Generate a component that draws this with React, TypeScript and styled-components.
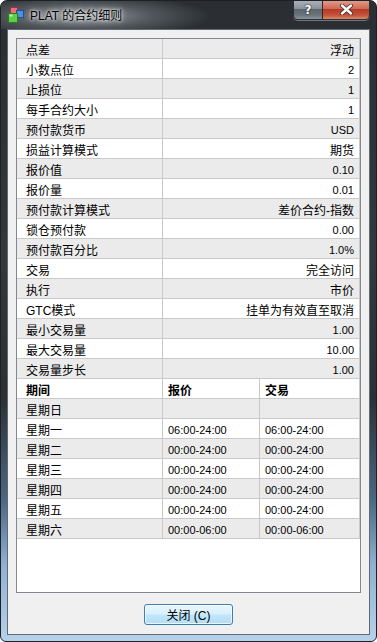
import React from "react";
import styled, { createGlobalStyle } from "styled-components";

const GlobalStyle = createGlobalStyle`
  html, body {
    margin: 0;
    padding: 0;
    background: #ffffff;
  }
  body {
    font-family: "Liberation Sans", "Noto Sans CJK SC", sans-serif;
  }
`;

const colors = {
  line: "#c9c9c9",
  altRow: "#ebebeb",
  client: "#f0f0f0",
  panelBorder: "#828790",
  text: "#000000",
};

const Window = styled.div`
  box-sizing: border-box;
  width: 377px;
  height: 642px;
  display: flex;
  flex-direction: column;
  border: 1px solid #1d2024;
  border-radius: 7px 7px 6px 6px;
  overflow: hidden;
  background: linear-gradient(
    180deg,
    #2a2e32 0%,
    #33383d 40%,
    #2c3035 62%,
    #4b6883 78%,
    #8fb0d2 88%,
    #b8d1ea 100%
  );
`;

const TitleBar = styled.div`
  height: 28px;
  display: flex;
  align-items: flex-start;
  padding: 0 6px 0 6px;
  background: radial-gradient(
    ellipse 130px 22px at 80px 15px,
    rgba(170, 176, 182, 0.85) 0%,
    rgba(120, 126, 132, 0.5) 55%,
    rgba(40, 44, 48, 0) 100%
  );
`;

const TitleGroup = styled.div`
  display: flex;
  align-items: center;
  gap: 6px;
  margin-top: 6px;
  flex: 1;
`;

const TitleText = styled.span`
  font-family: "Liberation Sans", "Noto Sans CJK SC", sans-serif;
  font-size: 12px;
  color: #000;
  text-shadow: 0 0 6px #fff, 0 0 3px #fff;
  line-height: 16px;
`;

const CaptionGroup = styled.div`
  display: flex;
  margin-top: -1px;
  border: 1px solid #2a2f35;
  border-top: none;
  border-radius: 0 0 5px 5px;
  overflow: hidden;
  box-shadow: 0 1px 0 rgba(255, 255, 255, 0.35);
`;

const CaptionButton = styled.div<{ $close?: boolean }>`
  height: 19px;
  width: ${(p) => (p.$close ? "47px" : "28px")};
  display: flex;
  align-items: center;
  justify-content: center;
  box-sizing: border-box;
  border-left: ${(p) => (p.$close ? "1px solid #3a2420" : "none")};
  background: ${(p) =>
    p.$close
      ? "linear-gradient(180deg, #e3a08f 0%, #cf6a57 45%, #b63a25 50%, #c4523c 80%, #d98a6a 100%)"
      : "linear-gradient(180deg, #aeb5bc 0%, #8a939b 45%, #5d666e 50%, #6a747c 80%, #8c969e 100%)"};
  color: #fff;
  font-family: "DejaVu Sans", sans-serif;
  font-weight: bold;
  font-size: 12px;
  text-shadow: 0 0 2px #222, 0 0 1px #222;
`;

const Client = styled.div`
  flex: 1;
  margin: 0 6px 6px 6px;
  display: flex;
  flex-direction: column;
  background: ${colors.client};
  border: 1px solid #5e6a77;
`;

const Panel = styled.div`
  flex: 1;
  margin: 8px 8px 0 8px;
  background: #fff;
  border: 1px solid ${colors.panelBorder};
`;

const Table = styled.div`
  width: 343px;
  display: flex;
  flex-direction: column;
`;

const Row = styled.div<{ $alt: boolean; $cols: string }>`
  display: grid;
  grid-template-columns: ${(p) => p.$cols};
  background: ${(p) => (p.$alt ? colors.altRow : "#ffffff")};
`;

const Cell = styled.div<{
  $align?: "left" | "right";
  $pad?: number;
  $latin?: boolean;
  $bold?: boolean;
}>`
  box-sizing: border-box;
  height: 20px;
  display: flex;
  align-items: center;
  justify-content: ${(p) => (p.$align === "right" ? "flex-end" : "flex-start")};
  padding: 2px 5px 0 ${(p) => p.$pad ?? 5}px;
  border-right: 1px solid ${colors.line};
  border-bottom: 1px solid ${colors.line};
  color: ${colors.text};
  font-size: ${(p) => (p.$latin ? "11px" : "12px")};
  font-weight: ${(p) => (p.$bold ? "bold" : "normal")};
  white-space: nowrap;
  overflow: hidden;
`;

const ButtonRow = styled.div`
  height: 41px;
  display: flex;
  justify-content: center;
  align-items: flex-start;
  padding-top: 11px;
  box-sizing: border-box;
`;

const CloseButton = styled.button`
  width: 89px;
  height: 21px;
  padding: 0;
  border: 1px solid #3c7fb1;
  border-radius: 3px;
  background: linear-gradient(180deg, #eaf6fd 0%, #d9f0fc 45%, #bee6fd 55%, #b4dcf3 100%);
  box-shadow: inset 0 0 0 1px rgba(255, 255, 255, 0.7);
  font-family: "Liberation Sans", "Noto Sans CJK SC", sans-serif;
  font-size: 12px;
  color: #000;
`;

const isLatin = (s: string) => /^[\x00-\x7f]*$/.test(s);

const specs: [string, string][] = [
  ["点差", "浮动"],
  ["小数点位", "2"],
  ["止损位", "1"],
  ["每手合约大小", "1"],
  ["预付款货币", "USD"],
  ["损益计算模式", "期货"],
  ["报价值", "0.10"],
  ["报价量", "0.01"],
  ["预付款计算模式", "差价合约-指数"],
  ["锁仓预付款", "0.00"],
  ["预付款百分比", "1.0%"],
  ["交易", "完全访问"],
  ["执行", "市价"],
  ["GTC模式", "挂单为有效直至取消"],
  ["最小交易量", "1.00"],
  ["最大交易量", "10.00"],
  ["交易量步长", "1.00"],
];

const sessions: [string, string, string][] = [
  ["星期日", "", ""],
  ["星期一", "06:00-24:00", "06:00-24:00"],
  ["星期二", "00:00-24:00", "00:00-24:00"],
  ["星期三", "00:00-24:00", "00:00-24:00"],
  ["星期四", "00:00-24:00", "00:00-24:00"],
  ["星期五", "00:00-24:00", "00:00-24:00"],
  ["星期六", "00:00-06:00", "00:00-06:00"],
];

const SPEC_COLS = "146px 197px";
const SESSION_COLS = "146px 97px 100px";

const AppIcon = () => (
  <svg width="17" height="17" viewBox="0 0 17 17">
    <rect x="3.5" y="0.5" width="7" height="7" fill="#e86f7c" stroke="#9c3340" />
    <rect x="9.5" y="3.5" width="7" height="7" fill="#4f8fe0" stroke="#1f4f95" />
    <rect x="1.5" y="6.5" width="9" height="9" fill="#5fcf4a" stroke="#2a7d1f" />
    <rect x="2.5" y="7.5" width="3" height="2" fill="#b6f3a8" />
  </svg>
);

const CloseGlyph = () => (
  <svg width="13" height="11" viewBox="0 0 13 11">
    <path
      d="M2 1.5 L11 9.5 M11 1.5 L2 9.5"
      stroke="#3a2a28"
      strokeWidth="4"
      strokeLinecap="round"
    />
    <path
      d="M2 1.5 L11 9.5 M11 1.5 L2 9.5"
      stroke="#ffffff"
      strokeWidth="2.4"
      strokeLinecap="round"
    />
  </svg>
);

const App: React.FC = () => {
  let index = 0;
  return (
    <>
      <GlobalStyle />
      <Window>
        <TitleBar>
          <TitleGroup>
            <AppIcon />
            <TitleText>PLAT 的合约细则</TitleText>
          </TitleGroup>
          <CaptionGroup>
            <CaptionButton>?</CaptionButton>
            <CaptionButton $close>
              <CloseGlyph />
            </CaptionButton>
          </CaptionGroup>
        </TitleBar>
        <Client>
          <Panel>
            <Table>
              {specs.map(([label, value]) => {
                const alt = index++ % 2 === 0;
                return (
                  <Row key={label} $alt={alt} $cols={SPEC_COLS}>
                    <Cell $pad={9}>{label}</Cell>
                    <Cell $align="right" $latin={isLatin(value)}>
                      {value}
                    </Cell>
                  </Row>
                );
              })}
              <Row $alt={index++ % 2 === 0} $cols={SESSION_COLS}>
                <Cell $pad={9} $bold>
                  期间
                </Cell>
                <Cell $bold>报价</Cell>
                <Cell $bold>交易</Cell>
              </Row>
              {sessions.map(([day, quote, trade]) => {
                const alt = index++ % 2 === 0;
                return (
                  <Row key={day} $alt={alt} $cols={SESSION_COLS}>
                    <Cell $pad={9}>{day}</Cell>
                    <Cell $latin>{quote}</Cell>
                    <Cell $latin>{trade}</Cell>
                  </Row>
                );
              })}
            </Table>
          </Panel>
          <ButtonRow>
            <CloseButton>关闭 (C)</CloseButton>
          </ButtonRow>
        </Client>
      </Window>
    </>
  );
};

export default App;
